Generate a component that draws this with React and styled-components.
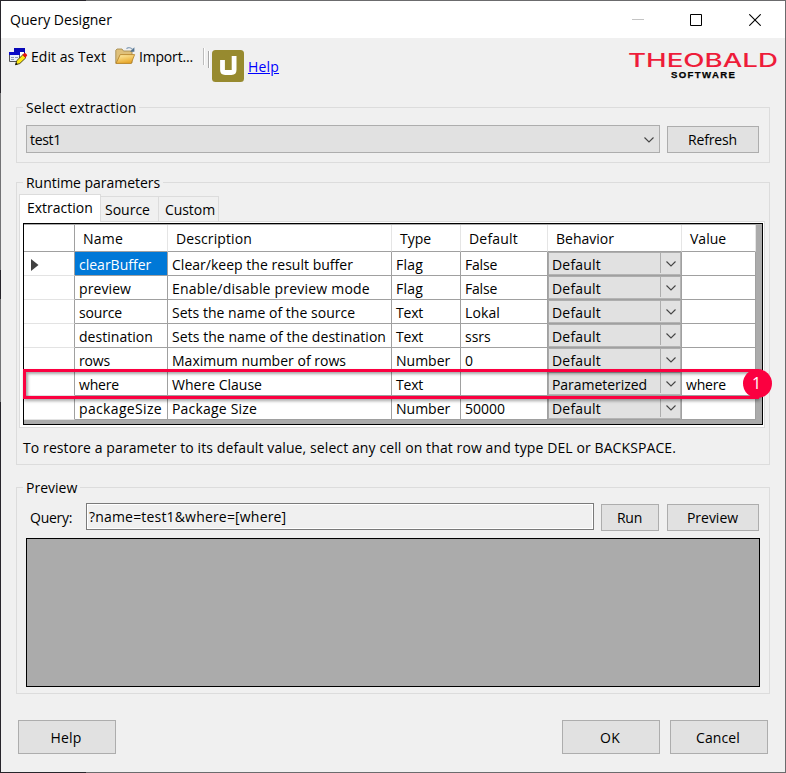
import React from "react";
import styled, { createGlobalStyle, css } from "styled-components";

const GlobalStyle = createGlobalStyle`
  * { box-sizing: border-box; }
  html, body { margin: 0; padding: 0; overflow: hidden; }
  body {
    font: 14px/20px "Open Sans", "Noto Sans", sans-serif;
    color: #000;
    background: #6b6b6d;
  }
`;

const Backdrop = styled.div`
  width: 786px;
  height: 773px;
  padding: 1px;
  background:
    linear-gradient(#27252b, #27252b) 0 0 / 86px 1px no-repeat,
    linear-gradient(#27252b, #27252b) 0 772px / 86px 1px no-repeat,
    linear-gradient(#27252b 93px, #737375 93px 270px, #27252b 270px 299px, #737375 299px 402px, #27252b 402px) 0 0 / 1px 100% no-repeat,
    #6b6b6d;
`;

const Dialog = styled.div`
  height: 100%;
  display: flex;
  flex-direction: column;
  background: #f0f0f0;
`;

const Text = styled.span`
  white-space: pre;
  letter-spacing: ${(p) => p.$track || 0}px;
`;

const TitleBar = styled.header`
  flex: none;
  height: 37px;
  display: flex;
  align-items: center;
  justify-content: space-between;
  padding-left: 9px;
  background: #fff;
`;

const WindowControls = styled.div`
  display: flex;
  height: 100%;
`;

const ControlButton = styled.div`
  width: ${(p) => p.$w}px;
  display: flex;
  align-items: center;
  justify-content: center;
`;

const Toolbar = styled.div`
  flex: none;
  height: 69px;
  display: flex;
  align-items: flex-start;
`;

const ToolItem = styled.div`
  display: flex;
  gap: ${(p) => p.$gap}px;
  margin: 9px 0 0 ${(p) => p.$ml}px;
  height: 20px;
`;

const Separator = styled.div`
  width: 2px;
  height: 17px;
  margin: ${(p) => p.$mt}px 0 0 ${(p) => p.$ml}px;
  background: linear-gradient(90deg, ${(p) => p.$color} 50%, #fff 50%);
`;

const UserMark = styled.svg`
  margin: 12px 0 0 2px;
`;

const HelpLink = styled.a`
  margin: 19px 0 0 4px;
  color: #00f;
  text-decoration: underline;
  letter-spacing: 0.2px;
`;

const Brand = styled.svg`
  margin: 11px 6px 0 auto;
  overflow: visible;
`;

const Group = styled.section`
  flex: none;
  height: ${(p) => p.$h}px;
  margin: ${(p) => p.$mt || 0}px 15px 0;
  border: 1px solid #dcdcdc;
  display: flex;
  flex-direction: column;
  padding: 0 ${(p) => p.$pr}px 0 ${(p) => p.$pl}px;
`;

const Legend = styled.div`
  flex: none;
  height: 20px;
  margin: -10px 0 0 ${(p) => p.$ml || 0}px;
  width: ${(p) => p.$w}px;
  padding-left: 3px;
  background: #f0f0f0;
`;

const SelectRow = styled.div`
  display: flex;
  align-items: flex-end;
  gap: 7px;
  margin-top: 7px;
`;

const Combo = styled.div`
  width: 634px;
  height: 28px;
  padding: 1px 5px 0 3px;
  border: 1px solid #adadad;
  background: #e1e1e1;
  display: flex;
  align-items: center;
  justify-content: space-between;
`;

const Button = styled.button`
  width: ${(p) => p.$w}px;
  height: ${(p) => p.$h || 27}px;
  padding: 0 1px 0 0;
  border: 1px solid #adadad;
  background: #e1e1e1;
  font: inherit;
  color: inherit;
  letter-spacing: ${(p) => p.$track || 0}px;
`;

const FooterButton = styled(Button)`
  padding: 1px 2px 0 0;
`;

const Tabs = styled.div`
  display: flex;
  align-items: flex-end;
  height: 27px;
  margin-top: 1px;
`;

const Tab = styled.div`
  flex: none;
  width: ${(p) => p.$w}px;
  height: 25px;
  padding: 3px 0 0 ${(p) => p.$pl}px;
  border: 1px solid #dcdcdc;
  border-width: 1px 1px 0 0;
  ${(p) =>
    p.$active &&
    css`
      height: 28px;
      margin-bottom: -1px;
      border-left-width: 1px;
      background: #fff;
      z-index: 1;
    `}
`;

const TabPanel = styled.div`
  flex: none;
  height: 207px;
  padding: 1px 0 0 3px;
  border: 1px solid #dcdcdc;
  background: #fff;
`;

const DataGrid = styled.div`
  width: 740px;
  height: 202px;
  padding-top: 1px;
  border: 1px solid #000;
  background: #ababab;
`;

const GridRow = styled.div`
  position: relative;
  display: grid;
  width: 732px;
  height: ${(p) => (p.$header ? 27 : 24)}px;
  grid-template-columns: 51px 93px 224px 69px 87px 134px 74px;
`;

const Cell = styled.div`
  padding: 3px 0 0 4px;
  border: solid #a0a0a0;
  border-width: 0 1px 1px 0;
  background: ${(p) => (p.$selected ? "#0078d7" : "#fff")};
  color: ${(p) => (p.$selected ? "#fff" : "#000")};
  overflow: hidden;
  white-space: nowrap;
`;

const HeaderCell = styled(Cell)`
  padding: 4px 0 0 8px;
  border-right-color: ${(p) => (p.$corner ? "#a0a0a0" : "#e5e5e5")};
`;

const RowHeader = styled(Cell)`
  display: flex;
  align-items: flex-start;
  border-bottom-color: #e3e3e3;
  padding: 7px 0 0 7px;
`;

const ComboCell = styled.div`
  display: flex;
  justify-content: space-between;
  height: 24px;
  border: 1px solid #a0a0a0;
  border-top-color: #adadad;
  border-left: 0;
  box-shadow: inset 1px 0 #a8a8a8, inset 0 -1px #b4b4b4, inset -1px 0 #b4b4b4;
  background: #e1e1e1;
  padding: 2px 0 0 4px;
`;

const DropArrow = styled.div`
  width: 21px;
  height: 20px;
  margin-top: -2px;
  padding: 1px 1px 0 0;
  border-left: 1px solid #adadad;
  display: flex;
  align-items: center;
  justify-content: center;
`;

const Highlight = styled.div`
  position: absolute;
  inset: -3px -3px -3px -1px;
  border: 3px solid #fb0040;
  z-index: 1;
  box-shadow: 1px 2px 3px rgba(0, 0, 0, 0.35), inset 2px 2px 3px rgba(0, 0, 0, 0.35);
`;

const Badge = styled.div`
  position: absolute;
  top: -3px;
  right: -16px;
  width: 29px;
  height: 29px;
  border-radius: 50%;
  background: #fb0040;
  color: #fff;
  font-size: 16px;
  line-height: 28px;
  text-align: center;
  padding-right: 2px;
  z-index: 2;
`;

const Hint = styled.div`
  margin: 10px 0 0 4px;
  white-space: nowrap;
  letter-spacing: 0.1px;
`;

const QueryRow = styled.div`
  display: flex;
  align-items: flex-end;
  margin-top: 5px;
`;

const QueryLabel = styled.label`
  flex: none;
  width: 60px;
  padding: 0 0 3px 4px;
  letter-spacing: -0.25px;
`;

const QueryField = styled.div`
  flex: none;
  width: 508px;
  height: 27px;
  margin: 0 7px 1px 0;
  padding: 3px 0 0 2px;
  border: 1px solid #7a7a7a;
  box-shadow: inset 0 0 0 1px #fff;
  letter-spacing: 0.18px;
`;

const PreviewArea = styled.div`
  width: 734px;
  height: 149px;
  margin-top: 7px;
  border: 1px solid #000;
  background: #ababab;
`;

const Footer = styled.footer`
  display: flex;
  gap: 10px;
  margin: 26px 17px 0;
`;

const Spacer = styled.div`
  flex: 1;
`;

const Chevron = () => (
  <svg width="10" height="6" viewBox="0 0 10 6" fill="none" stroke="#444" strokeWidth="1.1">
    <path d="M.5.5 5 5 9.5.5" />
  </svg>
);

const EditIcon = () => (
  <svg width="19" height="19" viewBox="0 0 19 19">
    <path d="M5.5 1.5h10v9h-10z" fill="#fff" stroke="#0a0a8c" />
    <path d="M5 1h11v4H5z" fill="#0808b8" />
    <path d="M.5 5.5h10v9H.5z" fill="#e8eefa" stroke="#555" />
    <path d="M0 5h11v3H0z" fill="#0808c8" />
    <path d="M2 10h3v1H2zM6 10h3v1H6zM2 12h3v1H2z" fill="#8d97b8" />
    <path d="m6.5 17.8 1.3-4.2 6-5.8 3 3-6 5.7z" fill="#ffe912" stroke="#3b3512" strokeWidth=".9" />
    <path d="m13.4 7.9 1.6-1.6q.8-.8 1.6 0l1.2 1.2q.8.8 0 1.6l-1.5 1.6z" fill="#e21414" />
    <path d="m6.3 18 .8-2.4 1.6 1.7z" fill="#111" />
  </svg>
);

const FolderIcon = () => (
  <svg width="21" height="19" viewBox="0 0 21 19">
    <defs>
      <linearGradient id="flap" x1="0" y1="0" x2=".4" y2="1">
        <stop offset="0" stopColor="#fff0ad" />
        <stop offset="1" stopColor="#e9a92c" />
      </linearGradient>
    </defs>
    <path d="M.8 16.2V3.2L2 2h5l1.5 2H17v12z" fill="#dfc07a" stroke="#a58c50" strokeWidth=".9" />
    <path d="m1 16.4 4.2-8.8H19.6l-3.4 8.8z" fill="url(#flap)" stroke="#b8862d" strokeWidth=".9" />
    <path d="M11.5 1.8Q14-.6 17.4 2.2" fill="none" stroke="#8ba3ba" strokeWidth="1.3" />
    <path d="M19.4.2v4.6h-4.4z" fill="#4f718f" />
  </svg>
);

const rows = [
  { name: ["clearBuffer", 0], desc: ["Clear/keep the result buffer", 0.02], type: ["Flag", 0.2], def: ["False", -0.2], selected: true },
  { name: ["preview", 0.09], desc: ["Enable/disable preview mode", 0.21], type: ["Flag", 0.2], def: ["False", -0.2] },
  { name: ["source", -0.15], desc: ["Sets the name of the source", 0.02], type: ["Text", -0.2], def: ["Lokal", 0.12] },
  { name: ["destination", 0.04], desc: ["Sets the name of the destination", 0.06], type: ["Text", -0.2], def: ["ssrs", 0] },
  { name: ["rows", -0.17], desc: ["Maximum number of rows", 0.01], type: ["Number", 0], def: ["0", 0] },
  { name: ["where", -0.18], desc: ["Where Clause", 0.01], type: ["Text", -0.2], def: ["", 0], behavior: ["Parameterized", -0.05], value: "where", marked: true },
  { name: ["packageSize", 0.34], desc: ["Package Size", 0.19], type: ["Number", 0], def: ["50000", 0] },
];

const headers = [["Name", 0.21], ["Description", 0.11], ["Type", -0.04], ["Default", 0.2], ["Behavior", 0], ["Value", 0]];

const Label = ({ of: [text, track] }) => <Text $track={track}>{text}</Text>;

function ParameterRow({ row }) {
  return (
    <GridRow>
      <RowHeader>
        {row.selected && (
          <svg width="8" height="12" viewBox="0 0 8 12">
            <path d="M0 0v12l7.5-6z" fill="#404040" />
          </svg>
        )}
      </RowHeader>
      <Cell $selected={row.selected}><Label of={row.name} /></Cell>
      <Cell><Label of={row.desc} /></Cell>
      <Cell><Label of={row.type} /></Cell>
      <Cell><Label of={row.def} /></Cell>
      <ComboCell>
        <Label of={row.behavior || ["Default", 0.2]} />
        <DropArrow><Chevron /></DropArrow>
      </ComboCell>
      <Cell><Label of={[row.value || "", -0.18]} /></Cell>
      {row.marked && (
        <>
          <Highlight />
          <Badge>1</Badge>
        </>
      )}
    </GridRow>
  );
}

export default function App() {
  return (
    <Backdrop>
      <GlobalStyle />
      <Dialog>
        <TitleBar>
          <Text $track={0.02}>Query Designer</Text>
          <WindowControls>
            <ControlButton $w={58}>
              <svg width="12" height="12"><path d="M0 5.5h12" stroke="#c4c4c4" /></svg>
            </ControlButton>
            <ControlButton $w={58}>
              <svg width="12" height="12"><path d="M.5.5h11v11H.5z" fill="none" stroke="#000" /></svg>
            </ControlButton>
            <ControlButton $w={60}>
              <svg width="12" height="12"><path d="m.3.3 11.4 11.4M11.7.3.3 11.7" stroke="#000" strokeWidth="1.1" /></svg>
            </ControlButton>
          </WindowControls>
        </TitleBar>

        <Toolbar>
          <ToolItem $ml={8} $gap={3}>
            <EditIcon />
            <Text $track={0.04}>Edit as Text</Text>
          </ToolItem>
          <ToolItem $ml={9} $gap={3}>
            <FolderIcon />
            <Text $track={-0.18}>Import...</Text>
          </ToolItem>
          <Separator $ml={10} $mt={10} $color="#bdbdbd" />
          <Separator $ml={3} $mt={13} $color="#a8a8a8" />
          <UserMark width="32" height="32" viewBox="0 0 32 32">
            <rect width="32" height="32" rx="3.5" fill="#978a2f" />
            <path d="M10.5 10v9.7q0 2.8 2.6 2.8h6.4q2.6 0 2.6-2.8V6" fill="none" stroke="#fff" strokeWidth="4.8" />
          </UserMark>
          <HelpLink>Help</HelpLink>
          <Brand width="151" height="33" viewBox="0 0 151 33">
            <text x="0" y="17.5" fontFamily="Inter" fontWeight="500" fontSize="18.5" fill="#ee1c3a" textLength="150" lengthAdjust="spacingAndGlyphs">THEOBALD</text>
            <text x="43" y="29" fontFamily="Liberation Sans" fontWeight="700" fontSize="9.6" fill="#000" stroke="#000" strokeWidth=".25" textLength="64">SOFTWARE</text>
          </Brand>
        </Toolbar>

        <Group $h={56} $pl={9} $pr={9}>
          <Legend $w={116} $ml={-3}><Text $track={0.13}>Select extraction</Text></Legend>
          <SelectRow>
            <Combo><Text $track={-0.3}>test1</Text><Chevron /></Combo>
            <Button $w={92} $track={-0.15}>Refresh</Button>
          </SelectRow>
        </Group>

        <Group $h={283} $mt={19} $pl={2} $pr={4}>
          <Legend $w={140} $ml={4}><Text $track={-0.03}>Runtime parameters</Text></Legend>
          <Tabs>
            <Tab $active $w={82} $pl={7}>Extraction</Tab>
            <Tab $w={58} $pl={4}>Source</Tab>
            <Tab $w={60} $pl={6}><Text $track={-0.07}>Custom</Text></Tab>
          </Tabs>
          <TabPanel>
            <DataGrid>
              <GridRow $header>
                <HeaderCell $corner />
                {headers.map((h) => (
                  <HeaderCell key={h[0]}><Label of={h} /></HeaderCell>
                ))}
              </GridRow>
              {rows.map((row) => (
                <ParameterRow key={row.name[0]} row={row} />
              ))}
            </DataGrid>
          </TabPanel>
          <Hint>To restore a parameter to its default value, select any cell on that row and type DEL or BACKSPACE.</Hint>
        </Group>

        <Group $h={207} $mt={22} $pl={9} $pr={10}>
          <Legend $w={57} $ml={-3}>Preview</Legend>
          <QueryRow>
            <QueryLabel>Query:</QueryLabel>
            <QueryField>?name=test1&amp;where=[where]</QueryField>
            <Button $w={58} $track={-0.2}>Run</Button>
            <Spacer />
            <Button $w={92}>Preview</Button>
          </QueryRow>
          <PreviewArea />
        </Group>

        <Footer>
          <FooterButton $w={98} $h={34} $track={0.2}>Help</FooterButton>
          <Spacer />
          <FooterButton $w={98} $h={34} $track={0.2}>OK</FooterButton>
          <FooterButton $w={98} $h={34} $track={0.1}>Cancel</FooterButton>
        </Footer>
      </Dialog>
    </Backdrop>
  );
}
